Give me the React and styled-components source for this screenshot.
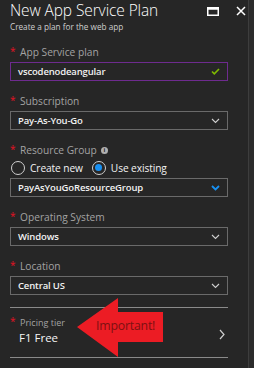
import React from "react";
import styled, { createGlobalStyle } from "styled-components";

const Global = createGlobalStyle`
  html, body {
    margin: 0;
    padding: 0;
    background: #2b2b2b;
  }
  body {
    font-family: "Open Sans", "Noto Sans", sans-serif;
  }
`;

const Blade = styled.div`
  position: relative;
  width: 249px;
  height: 368px;
  box-sizing: border-box;
  background: #262626;
  border-right: 1px solid #3d3d3d;
  overflow: hidden;
`;

const Header = styled.div`
  padding: 0 0 0 10px;
  height: 45px;
`;

const TitleRow = styled.div`
  display: flex;
  align-items: center;
  justify-content: space-between;
  height: 21px;
`;

const Title = styled.div`
  color: #ffffff;
  font-size: 15.5px;
  font-weight: 300;
  letter-spacing: -0.1px;
  line-height: 21px;
  white-space: nowrap;
`;

const Controls = styled.div`
  display: flex;
  align-items: center;
  gap: 17px;
  padding-right: 2px;
  margin-top: 1px;
`;

const Subtitle = styled.div`
  color: #cfcfcf;
  font-size: 8.2px;
  line-height: 9px;
  margin-top: 1px;
`;

const Form = styled.div`
  padding: 0 20px 0 10px;
`;

const Field = styled.div`
  margin-bottom: ${(p) => (p.$last ? 12 : 13)}px;
`;

const Label = styled.div`
  display: flex;
  align-items: center;
  height: 14px;
  margin-bottom: 3px;
  color: #a3a3a3;
  font-size: 10.2px;
  white-space: nowrap;
`;

const Star = styled.span`
  color: #e81123;
  font-size: 10px;
  width: 10px;
  margin-top: -3px;
`;

const Box = styled.div`
  display: flex;
  align-items: center;
  justify-content: space-between;
  height: 19px;
  box-sizing: border-box;
  padding: 0 7px 0 7px;
  border: 1px solid ${(p) => (p.$focus ? "#6e2b8f" : "#6a6a6a")};
  color: #f2f2f2;
  font-size: 9.5px;
  font-weight: 600;
  letter-spacing: -0.15px;
  white-space: nowrap;
`;

const Info = styled.span`
  display: inline-flex;
  align-items: center;
  justify-content: center;
  width: 7px;
  height: 7px;
  margin-left: 4px;
  border-radius: 50%;
  background: #b0b0b0;
  color: #262626;
  font-size: 6px;
  font-weight: 700;
  line-height: 1;
`;

const RadioRow = styled.div`
  display: flex;
  align-items: center;
  height: 15px;
  margin-bottom: 3px;
  gap: 9px;
`;

const RadioItem = styled.label`
  display: flex;
  align-items: center;
  gap: 5px;
  color: #f2f2f2;
  font-size: 10.2px;
  letter-spacing: -0.1px;
`;

const Circle = styled.span`
  display: flex;
  align-items: center;
  justify-content: center;
  width: 14px;
  height: 14px;
  box-sizing: border-box;
  border-radius: 50%;
  border: 1px solid #cfcfcf;
  margin-left: ${(p) => (p.$first ? 1 : 0)}px;

  &::after {
    content: "";
    display: ${(p) => (p.$on ? "block" : "none")};
    width: 7px;
    height: 7px;
    border-radius: 50%;
    background: #1890f1;
  }
`;

const Divider = styled.div`
  height: 1px;
  background: #8a8a8a;
`;

const TierRow = styled.div`
  display: flex;
  align-items: flex-start;
  justify-content: space-between;
  height: 49px;
  box-sizing: border-box;
  padding: 8px 3px 0 0;
`;

const TierLabel = styled.div`
  display: flex;
  align-items: center;
  color: #a3a3a3;
  font-size: 9px;
  height: 12px;
  white-space: nowrap;
`;

const TierValue = styled.div`
  color: #f5f5f5;
  font-size: 11.5px;
  padding-left: 9px;
  margin-top: 3px;
  line-height: 14px;
`;

const TierArrow = styled.svg`
  align-self: center;
  margin-top: -4px;
`;

const Callout = styled.div`
  position: absolute;
  left: 77px;
  top: 298px;
  width: 86px;
  height: 59px;
`;

const CalloutText = styled.span`
  position: absolute;
  left: 19px;
  top: 21px;
  color: #7d1111;
  font-size: 12.3px;
  line-height: 14px;
  letter-spacing: -0.2px;
  white-space: nowrap;
`;

const Chevron = ({ blue }) => (
  <svg width="9" height="6" viewBox="0 0 9 6">
    <path
      d="M1 1 L4.5 4.5 L8 1"
      fill="none"
      stroke={blue ? "#1890f1" : "#cfcfcf"}
      strokeWidth={blue ? 1.8 : 1.1}
    />
  </svg>
);

const Select = ({ value, blue }) => (
  <Box>
    <span>{value}</span>
    <Chevron blue={blue} />
  </Box>
);

const FieldLabel = ({ children, info }) => (
  <Label>
    <Star>*</Star>
    {children}
    {info && <Info>i</Info>}
  </Label>
);

export default function App() {
  return (
    <>
      <Global />
      <Blade>
        <Header>
          <TitleRow>
            <Title>New App Service Plan</Title>
            <Controls>
              <svg width="12" height="9" viewBox="0 0 12 9">
                <rect x="0.75" y="0.75" width="10.5" height="7.5" fill="none" stroke="#fff" strokeWidth="1.5" />
                <rect x="0.75" y="0.75" width="10.5" height="2" fill="#fff" />
              </svg>
              <svg width="10" height="10" viewBox="0 0 10 10">
                <path d="M1 1 L9 9 M9 1 L1 9" stroke="#fff" strokeWidth="1.5" />
              </svg>
            </Controls>
          </TitleRow>
          <Subtitle>Create a plan for the web app</Subtitle>
        </Header>

        <Form>
          <Field>
            <FieldLabel>App Service plan</FieldLabel>
            <Box $focus>
              <span>vscodenodeangular</span>
              <svg width="9" height="7" viewBox="0 0 9 7">
                <path d="M1 3.5 L3.3 5.8 L8 1" fill="none" stroke="#7fba00" strokeWidth="1.6" />
              </svg>
            </Box>
          </Field>

          <Field>
            <FieldLabel>Subscription</FieldLabel>
            <Select value="Pay-As-You-Go" />
          </Field>

          <Field>
            <FieldLabel info>Resource Group</FieldLabel>
            <RadioRow>
              <RadioItem>
                <Circle $first />
                Create new
              </RadioItem>
              <RadioItem>
                <Circle $on />
                Use existing
              </RadioItem>
            </RadioRow>
            <Select value="PayAsYouGoResourceGroup" blue />
          </Field>

          <Field>
            <FieldLabel>Operating System</FieldLabel>
            <Select value="Windows" />
          </Field>

          <Field $last>
            <FieldLabel>Location</FieldLabel>
            <Select value="Central US" />
          </Field>

          <Divider />
          <TierRow>
            <div>
              <TierLabel>
                <Star>*</Star>
                Pricing tier
              </TierLabel>
              <TierValue>F1 Free</TierValue>
            </div>
            <TierArrow width="6" height="11" viewBox="0 0 6 11">
              <path d="M1 1 L5 5.5 L1 10" fill="none" stroke="#cfcfcf" strokeWidth="1.2" />
            </TierArrow>
          </TierRow>
          <Divider />
        </Form>

        <Callout>
          <svg width="86" height="59" viewBox="0 0 86 59">
            <polygon points="0,29 41,0 41,14 86,14 86,44 41,44 41,59" fill="#ec1c24" />
          </svg>
          <CalloutText>Important!</CalloutText>
        </Callout>
      </Blade>
    </>
  );
}
